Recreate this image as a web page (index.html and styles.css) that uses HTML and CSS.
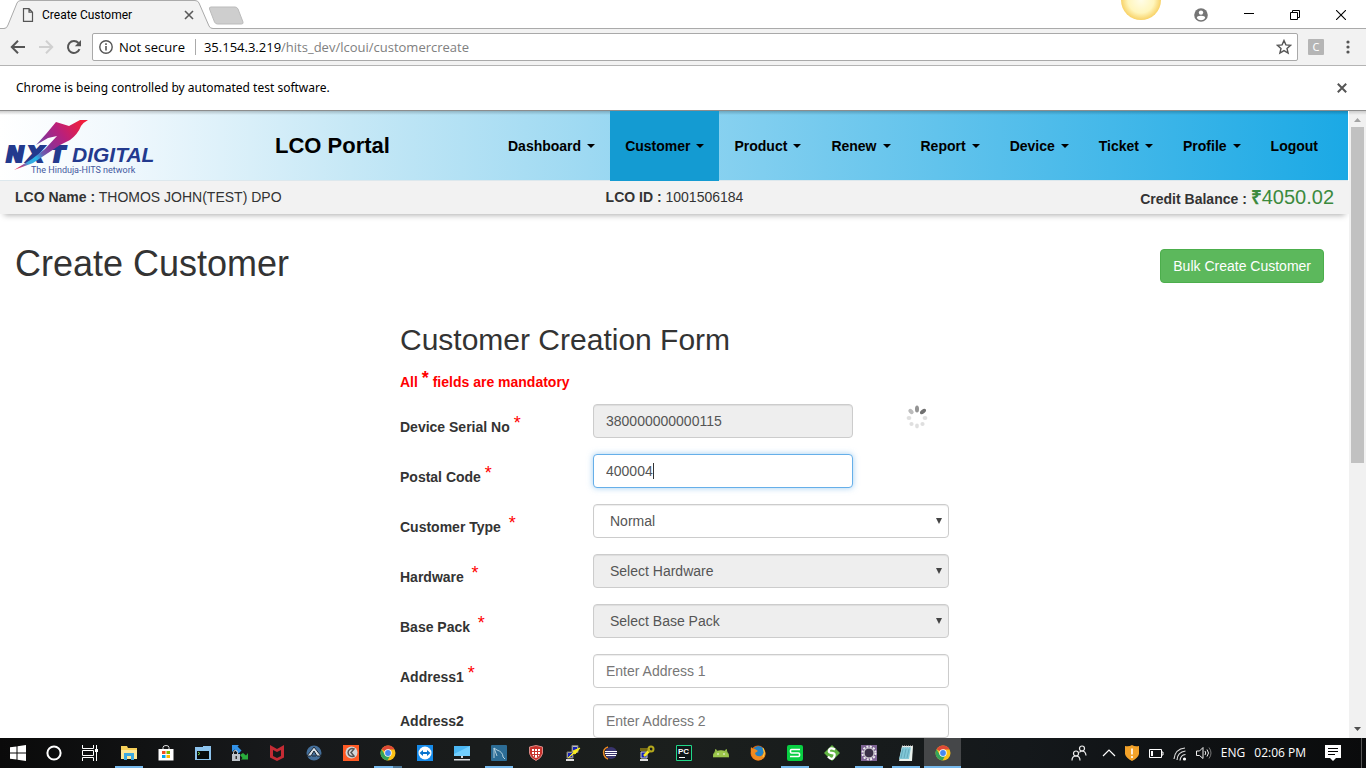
FILE: index.html
```html
<!DOCTYPE html>
<html lang="en">
<head>
<meta charset="utf-8">
<title>Create Customer</title>
<link rel="stylesheet" href="styles.css">
</head>
<body>
<header class="browser">
  <div class="tabstrip">
    <svg class="tab-shape" width="246" height="29" viewBox="0 0 246 29">
      <path d="M0 28.500H5Q7 28 8 25L17 3Q18 .5 21 .5H195Q198 .5 199 3L209 26Q210 28.500 213 28.500V29H0z" fill="#f2f2f2"/>
      <path d="M0 28.500H4Q7 28.500 8 25L17 3Q18 .5 21 .5H195Q198 .5 199 3L209 26Q210 28.500 213 28.500H246" fill="none" stroke="#aaa"/>
      <path d="M211 7h24q2 0 3 2l5 13q.5 2-1.500 2h-24q-2 0-3-2l-5-13q-.5-2 1.500-2z" fill="#cecece" stroke="#bbb"/>
    </svg>
    <div class="tab">
      <svg width="12" height="14" viewBox="0 0 12 14"><path d="M1.500.7h5.500l3.500 3.500v9.100h-9zM7 .7v3.500h3.500" fill="none" stroke="#555" stroke-width="1.200"/></svg>
      <span class="tab-title">Create Customer</span>
      <button class="plain" aria-label="Close tab"><svg width="10" height="10" viewBox="0 0 10 10"><path d="M1 1l8 8M9 1L1 9" stroke="#5a5a5a" stroke-width="1.600"/></svg></button>
    </div>
    <svg class="sun" width="42" height="20" viewBox="0 0 42 20"><defs><radialGradient id="sun"><stop offset="0" stop-color="#fffde8"/><stop offset=".65" stop-color="#fff6bd"/><stop offset="1" stop-color="#f8d267"/></radialGradient></defs><circle cx="21" cy="0" r="20" fill="url(#sun)"/></svg>
    <div class="window-buttons">
      <button class="plain" aria-label="Profile"><svg width="14" height="14" viewBox="0 0 14 14"><circle cx="7" cy="7" r="6.800" fill="#757575"/><circle cx="7" cy="4.600" r="2.200" fill="#fff"/><path d="M2.800 10q0-2.200 4.200-2.200t4.200 2.200q-1.500 2.300-4.200 2.300T2.800 10z" fill="#fff"/></svg></button>
      <button class="plain" aria-label="Minimize"><svg width="10" height="10" viewBox="0 0 10 10"><path d="M0 3.500h10" stroke="#000"/></svg></button>
      <button class="plain" aria-label="Restore"><svg width="10" height="10" viewBox="0 0 10 10"><path d="M.5 2.500h7v7h-7zM2.500 2.500v-2h7v7h-2" fill="none" stroke="#000"/></svg></button>
      <button class="plain" aria-label="Close"><svg width="10" height="10" viewBox="0 0 10 10"><path d="M0 0l10 10M10 0L0 10" stroke="#000" stroke-width="1.100"/></svg></button>
    </div>
  </div>
  <div class="toolbar">
    <button class="plain" aria-label="Back"><svg width="16" height="16" viewBox="0 0 16 16"><path d="M15 8H2M8 1.800L1.800 8 8 14.200" fill="none" stroke="#555" stroke-width="2"/></svg></button>
    <button class="plain" aria-label="Forward"><svg width="16" height="16" viewBox="0 0 16 16"><path d="M1 8h13M8 1.800L14.200 8 8 14.200" fill="none" stroke="#d0d0d0" stroke-width="2"/></svg></button>
    <button class="plain" aria-label="Reload"><svg width="16" height="16" viewBox="0 0 16 16"><path d="M13.500 10.200A6 6 0 1 1 12.500 4" fill="none" stroke="#555" stroke-width="2"/><path d="M15 1v6.200H8.800z" fill="#555"/></svg></button>
    <div class="omnibox">
      <svg width="14" height="14" viewBox="0 0 14 14"><circle cx="7" cy="7" r="6.200" fill="none" stroke="#555" stroke-width="1.400"/><path d="M7 6v4.500M7 3.300v1.600" stroke="#555" stroke-width="1.600"/></svg>
      <span>Not secure</span>
      <span class="url">35.154.3.219<span class="path">/hits_dev/lcoui/customercreate</span></span>
      <button class="plain" aria-label="Bookmark"><svg width="16" height="16" viewBox="0 0 16 16"><path d="M8 1.500l1.900 4.400 4.700.4-3.600 3.100 1.100 4.700L8 11.600l-4.100 2.500L5 9.400 1.400 6.300l4.700-.4z" fill="none" stroke="#555" stroke-width="1.400"/></svg></button>
    </div>
    <button class="extension">C</button>
    <button class="plain" aria-label="Menu"><svg width="4" height="14" viewBox="0 0 4 14"><g fill="#555"><circle cx="2" cy="2" r="1.600"/><circle cx="2" cy="7" r="1.600"/><circle cx="2" cy="12" r="1.600"/></g></svg></button>
  </div>
  <div class="infobar">
    <span>Chrome is being controlled by automated test software.</span>
    <button class="plain" aria-label="Dismiss"><svg width="10" height="10" viewBox="0 0 10 10"><path d="M.8.8l8.400 8.400M9.200.8L.8 9.200" stroke="#555" stroke-width="2"/></svg></button>
  </div>
</header>

<div class="viewport">
  <main class="page">
    <nav class="navbar">
      <a class="brand" href="#" aria-label="NXT Digital">
        <svg width="160" height="66" viewBox="0 0 160 66">
          <defs><linearGradient id="bird" gradientUnits="userSpaceOnUse" x1="84" y1="12" x2="20" y2="58"><stop offset="0" stop-color="#f01e3c"/><stop offset=".3" stop-color="#b8207c"/><stop offset=".5" stop-color="#8d3094"/><stop offset=".64" stop-color="#6a5fb0"/><stop offset=".74" stop-color="#27b5e8"/><stop offset=".86" stop-color="#3ea3dc"/><stop offset=".93" stop-color="#a04a94"/><stop offset="1" stop-color="#e8385c"/></linearGradient></defs>
          <text class="logo-nxt" y="49"><tspan x="6">N</tspan><tspan x="27">X</tspan><tspan x="50">T</tspan></text>
          <text class="logo-digital" x="72" y="49">DIGITAL</text>
          <path d="M88 7h-8l-11 6-13-4-10 12-10 11 12-7 9-2-12 13-13 10-18 11 19-7 12-8 15-10 10-5q8-6 11-14 3-4 7-6z" fill="url(#bird)"/>
          <text class="logo-sub" x="31" y="60">The Hinduja-HITS network</text>
        </svg>
      </a>
      <span class="portal">LCO Portal</span>
      <ul class="menu">
        <li><a class="drop" href="#">Dashboard</a></li>
        <li><a class="drop active" href="#">Customer</a></li>
        <li><a class="drop" href="#">Product</a></li>
        <li><a class="drop" href="#">Renew</a></li>
        <li><a class="drop" href="#">Report</a></li>
        <li><a class="drop" href="#">Device</a></li>
        <li><a class="drop" href="#">Ticket</a></li>
        <li><a class="drop" href="#">Profile</a></li>
        <li><a href="#">Logout</a></li>
      </ul>
    </nav>
    <div class="account">
      <div><b>LCO Name :</b> THOMOS JOHN(TEST) DPO</div>
      <div><b>LCO ID :</b> 1001506184</div>
      <div class="credit"><b>Credit Balance :</b> <span class="amount"><b class="rupee">₹</b>4050.02</span></div>
    </div>
    <div class="heading">
      <h1>Create Customer</h1>
      <button class="bulk">Bulk Create Customer</button>
    </div>
    <form class="form">
      <h2>Customer Creation Form</h2>
      <p class="note">All <span class="star">*</span> fields are mandatory</p>
      <div class="row">
        <label for="serial">Device Serial No <span class="star">*</span></label>
        <div class="field short"><input id="serial" type="text" value="380000000000115" disabled></div>
        <svg class="spinner" width="22" height="24" viewBox="0 0 22 24">
          <ellipse cx="11" cy="4" rx="2" ry="3.500" fill="#949494"/>
          <ellipse cx="17" cy="6.500" rx="2" ry="3.500" transform="rotate(50 17 6.500)" fill="#707070"/>
          <ellipse cx="5" cy="6.500" rx="2" ry="3" transform="rotate(-45 5 6.500)" fill="#bbb"/>
          <g fill="#dfdfdf"><ellipse cx="3" cy="13" rx="2.400" ry="1.900"/><ellipse cx="19" cy="13" rx="2.400" ry="1.900"/><circle cx="5.500" cy="19" r="2.100"/><circle cx="16.500" cy="19" r="2.100"/><ellipse cx="11" cy="21" rx="1.900" ry="2.400"/></g>
        </svg>
      </div>
      <div class="row">
        <label for="postal">Postal Code <span class="star">*</span></label>
        <div class="field short"><input id="postal" class="focused" type="text" value="400004"><span class="caret"></span></div>
      </div>
      <div class="row">
        <label for="type">Customer Type&nbsp; <span class="star">*</span></label>
        <div class="field pick"><select id="type"><option>Normal</option></select></div>
      </div>
      <div class="row">
        <label for="hardware">Hardware&nbsp; <span class="star">*</span></label>
        <div class="field pick"><select id="hardware" disabled><option>Select Hardware</option></select></div>
      </div>
      <div class="row">
        <label for="pack">Base Pack&nbsp; <span class="star">*</span></label>
        <div class="field pick"><select id="pack" disabled><option>Select Base Pack</option></select></div>
      </div>
      <div class="row">
        <label for="address1">Address1 <span class="star">*</span></label>
        <div class="field"><input id="address1" type="text" placeholder="Enter Address 1"></div>
      </div>
      <div class="row">
        <label class="optional" for="address2">Address2</label>
        <div class="field"><input id="address2" type="text" placeholder="Enter Address 2"></div>
      </div>
    </form>
  </main>
  <div class="scrollbar">
    <svg width="7" height="4" viewBox="0 0 7 4"><path d="M0 4L3.500 0 7 4z" fill="#a3a3a3"/></svg>
    <div class="track"><div class="thumb"></div></div>
    <svg width="7" height="4" viewBox="0 0 7 4"><path d="M0 0h7L3.500 4z" fill="#505050"/></svg>
  </div>
</div>

<footer class="taskbar">
  <div class="system">
    <button class="task" aria-label="Start"><svg width="16" height="16" viewBox="0 0 16 16"><path d="M0 2.300L6.500 1.400v6.100H0zM7.500 1.200L16 0v7.500H7.500zM0 8.500h6.500v6.100L0 13.700zM7.500 8.500H16V16l-8.500-1.200z" fill="#fff"/></svg></button>
    <button class="task" aria-label="Search"><svg width="16" height="16" viewBox="0 0 16 16"><circle cx="8" cy="8" r="6.600" fill="none" stroke="#fff" stroke-width="2"/></svg></button>
    <button class="task" aria-label="Task view"><svg width="16" height="16" viewBox="0 0 16 16"><path d="M.5 0v3.500h11V0M.5 16v-3.500h11V16M.5 5.500h11v5H.5zM14.500 0v16" fill="none" stroke="#fff"/><path d="M13 4h3v3h-3z" fill="#fff"/></svg></button>
  </div>
  <div class="apps">
    <button class="task open" aria-label="Files"><svg width="16" height="16" viewBox="0 0 16 16"><path d="M0 1h6l1 2h9v11H0z" fill="#f5cf5a"/><path d="M0 5h16v9H0z" fill="#ffe795"/><path d="M3 15V8h10v7h-3v-4H6v4z" fill="#3da9e0"/></svg></button>
    <button class="task" aria-label="Store"><svg width="16" height="16" viewBox="0 0 16 16"><path d="M5 4V2.500Q5 .5 8 .5t3 2V4" fill="none" stroke="#ddd"/><path d="M.5 4h15v11.500h-15z" fill="#fff"/><path d="M4 6h3.500v3H4z" fill="#f25022"/><path d="M8.500 6H12v3H8.500z" fill="#7fba00"/><path d="M4 10h3.500v3H4z" fill="#00a4ef"/><path d="M8.500 10H12v3H8.500z" fill="#ffb900"/></svg></button>
    <button class="task" aria-label="Terminal"><svg width="16" height="16" viewBox="0 0 16 16"><path d="M0 2h8V1h8v14H0z" fill="#8dc3ed"/><path d="M2 6h12v8H2z" fill="#08090b"/><path d="M3 7l2 1.500L3 10" fill="none" stroke="#7d5"/></svg></button>
    <button class="task" aria-label="WinSCP"><svg width="16" height="16" viewBox="0 0 16 16"><path d="M0 0h7L5.500 1.500l4 4-3 3-4-4L0 7z" fill="#3293ea"/><path d="M16 14.500H9l1.500-1.500-2.500-3 3-2 3 2.500L16 8z" fill="#29ad3d"/><path d="M1.500 9V7.500q0-2 2-2t2 2V9" fill="none" stroke="#ccc"/><path d="M0 9h8v7H0z" fill="#bdc3ca"/><path d="M3.500 11h1.500v3H3.500z" fill="#333"/></svg></button>
    <button class="task" aria-label="McAfee"><svg width="16" height="16" viewBox="0 0 16 16"><path d="M1 0l7 4 7-4v12.500L8 16l-7-3.500zM4 5v6l4 2 4-2V5L8 7z" fill="#c52b34" fill-rule="evenodd"/></svg></button>
    <button class="task" aria-label="AutoIt"><svg width="16" height="16" viewBox="0 0 16 16"><circle cx="8" cy="8" r="7.500" fill="#446f9b"/><path d="M1 11L8 2l7 9h-4L8 6l-3 5zM6 11h4" fill="#d8e0e6" stroke="#1d2835"/></svg></button>
    <button class="task" aria-label="Camera"><svg width="16" height="16" viewBox="0 0 16 16"><path d="M0 0h16v16H0z" fill="#ff5a24"/><circle cx="8.500" cy="7.500" r="6" fill="#d3d7d8"/><path d="M11 4A4 4 0 1 0 11 11L8 7.500z" fill="none" stroke="#555" stroke-width="1.500"/></svg></button>
    <button class="task open grouped" aria-label="Chrome"><svg width="16" height="16" viewBox="0 0 16 16"><circle cx="8" cy="8" r="7.500" fill="#fbc116"/><path d="M8 8L1.500 4.200A7.500 7.500 0 0 1 14.700 4.500H8z" fill="#df4936"/><path d="M1.500 4.200A7.500 7.500 0 0 0 7.500 15.500L10.500 10 5 10z" fill="#34a35b"/><circle cx="8" cy="8" r="3.700" fill="#fff"/><circle cx="8" cy="8" r="2.900" fill="#4688f1"/></svg></button>
    <button class="task" aria-label="TeamViewer"><svg width="16" height="16" viewBox="0 0 16 16"><path d="M0 0h16v16H0z" fill="#168bea"/><circle cx="8" cy="8" r="6.500" fill="#fff"/><path d="M2.500 8L6 5v2h4V5l3.500 3L10 11V9H6v2z" fill="#0874ce"/></svg></button>
    <button class="task" aria-label="Remote"><svg width="16" height="16" viewBox="0 0 16 16"><path d="M0 1h16v10H0z" fill="#4bb7f3"/><path d="M0 9L16 1v10H0z" fill="#72cfff"/><path d="M7 11h2v2H7zM0 14h16v1.500H0z" fill="#d6dade"/></svg></button>
    <button class="task open" aria-label="Workbench"><svg width="16" height="16" viewBox="0 0 16 16"><rect width="16" height="16" rx="1" fill="#2c6c95"/><path d="M3 13V3l3 2q6 2 6 7l2 2M3 3l3 8" fill="none" stroke="#b3cfdd"/></svg></button>
    <button class="task" aria-label="Shield"><svg width="16" height="16" viewBox="0 0 16 16"><path d="M1.500 2L8 .5 14.500 2v6.500Q13.500 13 8 15.500 2.500 13 1.500 8.500z" fill="#c8322c" stroke="#d98a86"/><path d="M4 4h8v5.500q-1.500 2.500-4 3.500-2.500-1-4-3.500z" fill="#fff"/><path d="M6.500 4v8M9.500 4v8M4 6.500h8M4 9.500h8" stroke="#c8322c"/></svg></button>
    <button class="task" aria-label="PuTTY"><svg width="16" height="16" viewBox="0 0 16 16"><path d="M7 .5h6v7H7zM2 7h6v6H2z" fill="#bbb" stroke="#777"/><path d="M8 2h4v4H8zM3 8h4v4H3z" fill="#1723bb"/><path d="M3 13l5-5 2 1 5-6-7 3 1 2z" fill="#f8eb22" stroke="#f8eb22"/><path d="M1 14h8v2H1z" fill="#ddd"/></svg></button>
    <button class="task" aria-label="Eclipse"><svg width="16" height="16" viewBox="0 0 16 16"><path d="M6 2Q0 4 2 10q1 3 4 4" fill="none" stroke="#ef8c24" stroke-width="1.500"/><circle cx="9" cy="8" r="6" fill="#39346d"/><path d="M3 6.500h12M3 8.500h12M4 10.500h10" stroke="#fff"/></svg></button>
    <button class="task" aria-label="PuTTYgen"><svg width="16" height="16" viewBox="0 0 16 16"><path d="M1 3h10v3H1z" fill="#746915"/><path d="M2 7h6v6H2z" fill="#1723bb" stroke="#ccc"/><path d="M5 11l6-6" stroke="#f8eb22" stroke-width="2.500"/><circle cx="12" cy="4" r="2.500" fill="none" stroke="#b5a91c" stroke-width="2"/><path d="M1 14h8v2H1z" fill="#ddd"/></svg></button>
    <button class="task" aria-label="PyCharm"><svg width="16" height="16" viewBox="0 0 16 16"><path d="M.5.500h15v15H.5z" fill="#101719" stroke="#21d789"/><text class="icon-pc" x="2" y="9">PC</text><path d="M3 12.500h6" stroke="#fff"/></svg></button>
    <button class="task" aria-label="Android"><svg width="16" height="16" viewBox="0 0 16 16"><path d="M0 12q.5-5 4-6L2.500 4M16 12q-.5-5-4-6l1.500-2M0 12q0-6 8-6.500 8 .5 8 6.500z" fill="#9bc64b" stroke="#9bc64b" stroke-width=".6"/><circle cx="5" cy="9" r=".8" fill="#fff"/><circle cx="11" cy="9" r=".8" fill="#fff"/></svg></button>
    <button class="task" aria-label="Firefox"><svg width="16" height="16" viewBox="0 0 16 16"><circle cx="8" cy="8" r="7.500" fill="#e66000"/><circle cx="8.500" cy="6.500" r="5.500" fill="#2482c5"/><path d="M1 2q1 2 4 2l3 2-3 2q1 4 6 3 3-2 3-6 3 4 0 8-6 5-11 0Q0 9 1 2z" fill="#f08b20"/><path d="M13 3q3 5 0 9" stroke="#ffd23c" fill="none"/></svg></button>
    <button class="task open" aria-label="WPS"><svg width="16" height="16" viewBox="0 0 16 16"><rect width="16" height="16" rx="2" fill="#08cf42"/><path d="M13 4.500H4.500q-1 0-1 1V7q0 1 1 1h7q1 0 1 1v1.500q0 1-1 1H3" fill="none" stroke="#fff" stroke-width="1.600"/></svg></button>
    <button class="task" aria-label="Sync"><svg width="16" height="16" viewBox="0 0 16 16"><path d="M8 0l8 8-8 8-8-8z" fill="#62b443"/><path d="M11 4.500Q6 2 5 5t3 3 2 4-6-.5" fill="none" stroke="#fff" stroke-width="2.300"/></svg></button>
    <button class="task open" aria-label="Settings"><svg width="16" height="16" viewBox="0 0 16 16"><path d="M0 0h16v16H0z" fill="#7d6393"/><circle cx="8" cy="8" r="6.500" fill="none" stroke="#eee" stroke-width="2" stroke-dasharray="2 1.400"/><circle cx="8" cy="8" r="5" fill="#3b3148" stroke="#ddd"/></svg></button>
    <button class="task open" aria-label="Notepad"><svg width="16" height="16" viewBox="0 0 16 16"><path d="M4 1h11l-1 15H1z" fill="#e8f0ec"/><path d="M4 2h9l-2 12H1z" fill="#81c6d6"/><path d="M5 4l-2 9M8 4l-2 9M11 4L9 13" stroke="#5099ab" stroke-width=".6"/><path d="M4 1.500h11" stroke="#ddd" stroke-width="2" stroke-dasharray="1 1"/></svg></button>
    <button class="task open current" aria-label="Chrome window"><svg width="16" height="16" viewBox="0 0 16 16"><circle cx="8" cy="8" r="7.500" fill="#fbc116"/><path d="M8 8L1.500 4.200A7.500 7.500 0 0 1 14.700 4.500H8z" fill="#df4936"/><path d="M1.500 4.200A7.500 7.500 0 0 0 7.500 15.500L10.500 10 5 10z" fill="#34a35b"/><circle cx="8" cy="8" r="3.700" fill="#fff"/><circle cx="8" cy="8" r="2.900" fill="#4688f1"/></svg></button>
  </div>
  <div class="tray">
    <svg class="people" width="16" height="16" viewBox="0 0 16 16"><g fill="none" stroke="#eee" stroke-width="1.200"><circle cx="5" cy="8.500" r="2.500"/><path d="M1 15.500q0-4.500 4-4.500t4 4.500"/><circle cx="11" cy="3.500" r="2.500"/><path d="M8.500 7.500Q9 6 11 6q3.500 0 4 4.500"/></g></svg>
    <svg width="14" height="16" viewBox="0 0 14 16"><path d="M1 11l6-6 6 6" fill="none" stroke="#fff" stroke-width="1.200"/></svg>
    <svg width="14" height="16" viewBox="0 0 14 16"><path d="M0 1q4 1 7-1 3 2 7 1v8q-1 4-7 7-6-3-7-7z" fill="#f3a229"/><path d="M7 3.500v6M7 11v2" stroke="#fff" stroke-width="1.600"/></svg>
    <svg width="16" height="16" viewBox="0 0 16 16"><path d="M1.500 4.500h12v8h-12zM13.500 7h1.500v3h-1.500" fill="none" stroke="#fff"/><path d="M3 6h2v5H3z" fill="#fff"/></svg>
    <svg width="14" height="16" viewBox="0 0 14 16"><g fill="none" stroke="#ddd" stroke-width="1.200"><path d="M1 14Q2 4 12 3M4 15q.5-8 8.500-9M7 15.500Q7.500 10 12.500 9.500"/></g><circle cx="11.500" cy="14" r="1.600" fill="#fff"/></svg>
    <svg width="16" height="16" viewBox="0 0 16 16"><g fill="none" stroke="#eee"><path d="M.5 6h3L7 2.500v11L3.500 10.500h-3z"/><path d="M9 6q1.500 2 0 4M11 4.500q3 3.500 0 7"/><path d="M13 2.500q4 5.500 0 11" stroke="#777"/></g></svg>
    <span>ENG</span>
    <span class="clock">02:06 PM</span>
    <svg width="16" height="16" viewBox="0 0 16 16"><path d="M0 0h16v13h-5l-3 3-3-3H0z" fill="#fff"/><path d="M3 3.500h10M3 6.500h10M3 9.500h7" stroke="#000"/></svg>
  </div>
</footer>
</body>
</html>
```
FILE: styles.css
```css
* { box-sizing: border-box; }
body {
  margin: 0;
  height: 100vh;
  display: flex;
  flex-direction: column;
  overflow: hidden;
  background: #fff;
  color: #333;
  font: 14px/20px "Liberation Sans", Arial, sans-serif;
}
svg { display: block; flex: none; }
button, input, select { font: inherit; margin: 0; }
.plain { border: 0; padding: 0; background: none; flex: none; }

/* Browser frame */
.browser {
  flex: none;
  font: 12px/16px "Noto Sans", "Open Sans", sans-serif;
  color: #000;
}
.tabstrip {
  position: relative;
  display: flex;
  align-items: center;
  height: 29px;
  background: linear-gradient(#fff 28px, #aaa 28px);
}
.tab-shape { position: absolute; left: 0; top: 0; }
.tab {
  position: relative;
  display: flex;
  align-items: center;
  width: 194px;
  padding-left: 22px;
}
.tab-title { flex: 1; padding-left: 8px; font-family: Roboto, sans-serif; }
.sun { position: absolute; right: 204px; top: 0; }
.window-buttons {
  display: flex;
  align-items: center;
  gap: 36px;
  margin-left: auto;
  padding-right: 20px;
  height: 26px;
}
.toolbar {
  display: flex;
  align-items: center;
  gap: 12px;
  height: 37px;
  padding: 0 16px 0 10px;
  background: #f2f2f2;
  border-bottom: 1px solid #b4b4b4;
}
.omnibox {
  flex: 1;
  display: flex;
  align-items: center;
  gap: 6px;
  height: 28px;
  margin-left: -2px;
  padding: 0 5px 0 6px;
  background: #fff;
  border: 1px solid #a9a9a9;
  border-radius: 2px;
  font-family: "Open Sans", "Noto Sans", sans-serif;
  font-size: 13px;
}
.url {
  flex: 1;
  margin-left: 4px;
  padding-left: 8px;
  border-left: 1px solid #aaa;
}
.path { color: #808080; }
.extension {
  width: 16px;
  height: 16px;
  padding: 0;
  border: 0;
  border-radius: 1px;
  background: #b5b5b5;
  color: #fff;
  font-size: 11px;
  line-height: 16px;
  margin: 0 10px 0 -2px;
}
.infobar {
  display: flex;
  align-items: center;
  justify-content: space-between;
  height: 45px;
  padding: 0 19px 0 16px;
  border-bottom: 1px solid #8d8d8d;
}

/* Page */
.viewport { flex: 1; display: flex; min-height: 0; }
.page { flex: 1; min-width: 0; overflow: hidden; }
.navbar {
  display: flex;
  align-items: center;
  height: 70px;
  margin-right: 1px;
  padding: 0 15px 0 0;
  background: linear-gradient(rgba(0, 0, 0, .2), rgba(0, 0, 0, 0) 4px), linear-gradient(90deg, #fff, #f0f8fd 9%, #c6e8f6 26%, #1ba9e5);
  border-bottom: 1px solid #dde8ed;
}
.brand { width: 275px; }
.logo-nxt { font: italic bold 22px "DejaVu Sans", sans-serif; fill: #233a8e; stroke: #233a8e; stroke-width: 2px; }
.logo-digital { font: italic bold 21px "Liberation Sans", sans-serif; fill: #233a8e; }
.logo-sub { font: 9px Roboto, sans-serif; fill: #44589f; }
.portal { color: #000; font-size: 22px; font-weight: bold; }
.menu {
  display: flex;
  margin: 0 0 0 auto;
  padding: 0;
  list-style: none;
}
.menu a {
  display: flex;
  align-items: center;
  height: 70px;
  padding: 0 15px;
  color: #000;
  font-weight: bold;
  text-decoration: none;
}
.menu .active { background: #149bd2; }
.drop::after {
  content: "";
  margin-left: 6px;
  border: 4px solid transparent;
  border-top-color: #000;
  border-bottom: 0;
}
.account {
  display: grid;
  grid-template-columns: 1fr auto 1fr;
  height: 33px;
  padding: 6px 15px 0;
  background: #f2f2f2;
  box-shadow: 0 5px 6px -4px #aaa;
}
.credit { text-align: right; }
.amount { color: #3c8a3e; font-size: 20px; }
.rupee { font-size: 19px; }
.heading {
  display: flex;
  justify-content: space-between;
  align-items: flex-start;
  padding: 30px 25px 0 15px;
}
h1 { margin: 0; font-size: 36px; font-weight: normal; line-height: 40px; }
.bulk {
  height: 34px;
  margin-top: 5px;
  padding: 0 12px;
  border: 1px solid #4cae4c;
  border-radius: 4px;
  background: #5cb85c;
  color: #fff;
}
.form { max-width: 579px; margin: 0 auto; padding: 39px 15px 0; }
h2 { margin: 0; font-size: 30px; font-weight: normal; line-height: 33px; }
.note { margin: 13px 0 10px; color: #f00; font-weight: bold; line-height: 24px; }
.star { color: #f00; font-size: 18px; font-weight: normal; line-height: 1; vertical-align: 3px; }
.note .star { font-weight: bold; }
.row {
  position: relative;
  display: grid;
  grid-template-columns: 193px 1fr;
  margin-bottom: 16px;
}
label { padding-top: 10px; font-weight: bold; line-height: 20px; height: 34px; }
.optional { padding-top: 7px; }
.field { position: relative; }
.short { width: 260px; }
.field input, .field select {
  display: block;
  width: 100%;
  height: 34px;
  padding: 6px 12px;
  border: 1px solid #ccc;
  border-radius: 4px;
  background: #fff;
  box-shadow: inset 0 1px 1px rgba(0, 0, 0, .075);
  color: #555;
  opacity: 1;
  outline: 0;
  appearance: none;
}
.field select { padding-left: 16px; }
.field input:disabled, .field select:disabled { background: #eee; }
.field input::placeholder { color: #777; }
.field .focused { border-color: #66afe9; box-shadow: 0 0 6px rgba(102, 175, 233, .6); }
.caret { position: absolute; left: 60px; top: 9px; width: 1px; height: 16px; background: #333; }
.pick::after {
  content: "";
  position: absolute;
  right: 7px;
  top: 14px;
  border: 3px solid transparent;
  border-top: 6px solid #444;
  border-bottom: 0;
}
.spinner { position: absolute; right: 21px; top: 1px; }
.scrollbar {
  width: 17px;
  display: flex;
  flex-direction: column;
  align-items: center;
  padding: 7px 0;
  background: linear-gradient(#ccc, #f1f1f1 4px);
}
.track { flex: 1; width: 13px; margin: 5px 0; }
.thumb { height: 56.5%; background: #c1c1c1; }

/* Taskbar */
.taskbar {
  flex: none;
  display: flex;
  height: 30px;
  background: linear-gradient(90deg, #0a0a0a, #17191b 20%, #1b1f1d 50%, #14181b 75%, #0a0b0c);
  color: #fff;
  font: 12px/30px "Open Sans", "Noto Sans", sans-serif;
}
.system, .apps { display: flex; }
.apps { margin-left: 2px; }
.task {
  position: relative;
  display: flex;
  align-items: center;
  justify-content: center;
  width: 37px;
  height: 30px;
  padding: 0;
  border: 0;
  background: none;
}
.system .task { width: 36px; }
.open::after {
  content: "";
  position: absolute;
  left: 5px;
  right: 4px;
  bottom: 0;
  height: 2px;
  background: #76b9ed;
}
.grouped::after { background: linear-gradient(90deg, #76b9ed 19px, #4c7696 19px); }
.current { background: #454749; }
.current::after { left: 0; right: 0; }
.icon-pc { font: bold 8px "Liberation Sans", sans-serif; fill: #fff; }
.tray {
  display: flex;
  align-items: center;
  gap: 9px;
  margin-left: auto;
  margin-right: 4px;
  padding-right: 20px;
  border-right: 1px solid #555;
}
.people { margin-right: 6px; }
.clock { margin-right: 10px; }
```
